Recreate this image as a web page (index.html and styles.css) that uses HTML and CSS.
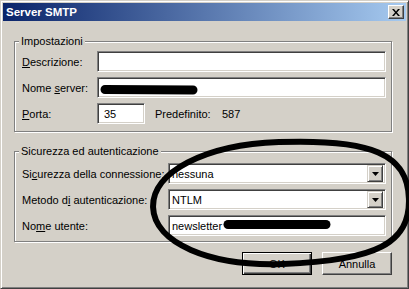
FILE: index.html
```html
<!DOCTYPE html>
<html lang="it">
<head>
<meta charset="utf-8">
<title>Server SMTP</title>
<link rel="stylesheet" href="styles.css">
</head>
<body>
<div class="window">
  <div class="titlebar">
    <span class="title">Server SMTP</span>
    <span class="close"><svg width="8" height="7" viewBox="0 0 8 7"><path d="M0 0h2l2 2.5L6 0h2L5 3.5 8 7H6L4 4.5 2 7H0l3-3.5z" fill="#000"/></svg></span>
  </div>
  <div class="body">
    <fieldset class="group g1">
      <legend>Impostazioni</legend>
      <div class="rows">
        <div class="row"><span class="lbl l1"><u>D</u>escrizione:</span><div class="edit wide"></div></div>
        <div class="row"><span class="lbl l1">Nome <u>s</u>erver:</span><div class="edit wide"></div></div>
        <div class="row"><span class="lbl l1"><u>P</u>orta:</span><div class="edit port">35</div><span class="pre">Predefinito:</span><span>587</span></div>
      </div>
    </fieldset>
    <fieldset class="group g2">
      <legend>Sicurezza ed autenticazione</legend>
      <div class="rows">
        <div class="row"><span class="lbl l2">Si<u>c</u>urezza della connessione:</span><div class="combo"><span class="combo-text">nessuna</span><span class="combo-btn"><svg width="7" height="4" viewBox="0 0 7 4"><path d="M0 0h7L3.5 4z" fill="#000"/></svg></span></div></div>
        <div class="row"><span class="lbl l2">Metodo d<u>i</u> autenticazione:</span><div class="combo"><span class="combo-text">NTLM</span><span class="combo-btn"><svg width="7" height="4" viewBox="0 0 7 4"><path d="M0 0h7L3.5 4z" fill="#000"/></svg></span></div></div>
        <div class="row"><span class="lbl l2">No<u>m</u>e utente:</span><div class="edit combo-w">newsletter</div></div>
      </div>
    </fieldset>
    <div class="buttons">
      <div class="btn default"><span>OK</span></div>
      <div class="btn"><span>Annulla</span></div>
    </div>
  </div>
  <svg class="marker" width="409" height="289" viewBox="0 0 409 289">
    <path d="M104 88.5 L192 89" stroke="#000" stroke-width="9" stroke-linecap="round" fill="none"/>
    <path d="M227 223.5 L325 223.5" stroke="#000" stroke-width="9" stroke-linecap="round" fill="none"/>
    <path transform="translate(280 202) rotate(-2)" d="M128 0C128 -44.5 93.4 -61 0 -61C-74 -61 -128 -35.4 -128 0C-128 35.4 -74 61 0 61C93.4 61 128 44.5 128 0Z" fill="none" stroke="#000" stroke-width="6"/>
  </svg>
</div>
</body>
</html>
```
FILE: styles.css
```css
* { box-sizing: border-box; }
html, body { margin: 0; padding: 0; }
body {
  font-family: "Liberation Sans", Arial, sans-serif;
  font-size: 11px;
  color: #000;
  background: #d4d0c8;
}
.window {
  position: relative;
  width: 409px;
  height: 289px;
  background: #d4d0c8;
  border: 1px solid;
  border-color: #d4d0c8 #404040 #404040 #d4d0c8;
  box-shadow: inset 1px 1px 0 #fff, inset -1px -1px 0 #808080;
  padding: 2px;
}
.titlebar {
  height: 18px;
  display: flex;
  align-items: center;
  justify-content: space-between;
  padding: 0 2px 0 3px;
  background: linear-gradient(to right, #0a246a, #a6caf0);
}
.title {
  color: #fff;
  font-weight: bold;
  font-size: 11.5px;
}
.close {
  width: 16px;
  height: 14px;
  display: flex;
  align-items: center;
  justify-content: center;
  background: #d4d0c8;
  border: 1px solid;
  border-color: #fff #404040 #404040 #fff;
  box-shadow: inset -1px -1px 0 #808080;
  padding-right: 1px;
}
.body {
  padding: 14px 14px 0 11px;
}
.group {
  margin: 0;
  border: 1px solid #808080;
  box-shadow: inset 1px 1px 0 #fff, 1px 1px 0 #fff;
  padding: 3px 5px 7px 7px;
  min-width: 0;
}
.group legend {
  padding: 0 2px;
  margin-left: -3px;
  line-height: 13px;
  background: #d4d0c8;
}
.g2 {
  margin-top: 13px;
  padding-top: 5px;
  padding-bottom: 5px;
}
.rows {
  display: grid;
  gap: 5px;
}
.row {
  display: flex;
  align-items: center;
  height: 21px;
}
.lbl { flex: none; }
.l1 { width: 75px; }
.l2 { width: 146px; }
u { text-decoration: underline; text-underline-offset: 1px; }
.edit {
  height: 21px;
  background: #fff;
  border: 1px solid;
  border-color: #808080 #fff #fff #808080;
  box-shadow: inset 1px 1px 0 #404040, inset -1px -1px 0 #d4d0c8;
  display: flex;
  align-items: center;
  padding-left: 6px;
}
.wide { width: 289px; }
.port { width: 48px; }
.combo-w { width: 218px; padding-left: 3px; }
.pre {
  margin-left: 10px;
  width: 67px;
}
.combo {
  width: 218px;
  height: 21px;
  display: flex;
  align-items: center;
  background: #fff;
  border: 1px solid;
  border-color: #808080 #fff #fff #808080;
  box-shadow: inset 1px 1px 0 #404040, inset -1px -1px 0 #d4d0c8;
  padding: 2px;
}
.combo-text {
  flex: 1;
  padding-left: 1px;
}
.combo-btn {
  width: 16px;
  height: 17px;
  display: flex;
  align-items: center;
  justify-content: center;
  background: #d4d0c8;
  border: 1px solid;
  border-color: #d4d0c8 #404040 #404040 #d4d0c8;
  box-shadow: inset 1px 1px 0 #fff, inset -1px -1px 0 #808080;
}
.buttons {
  margin-top: 10px;
  display: flex;
  justify-content: flex-end;
  gap: 10px;
}
.btn {
  width: 70px;
  height: 23px;
  display: flex;
  align-items: center;
  justify-content: center;
  background: #d4d0c8;
  border: 1px solid;
  border-color: #fff #404040 #404040 #fff;
  box-shadow: inset -1px -1px 0 #808080;
}
.btn.default {
  border-color: #000;
  box-shadow: inset 1px 1px 0 #fff, inset -1px -1px 0 #404040, inset -2px -2px 0 #808080;
}
.marker {
  position: absolute;
  left: 0;
  top: 0;
  pointer-events: none;
}
```
